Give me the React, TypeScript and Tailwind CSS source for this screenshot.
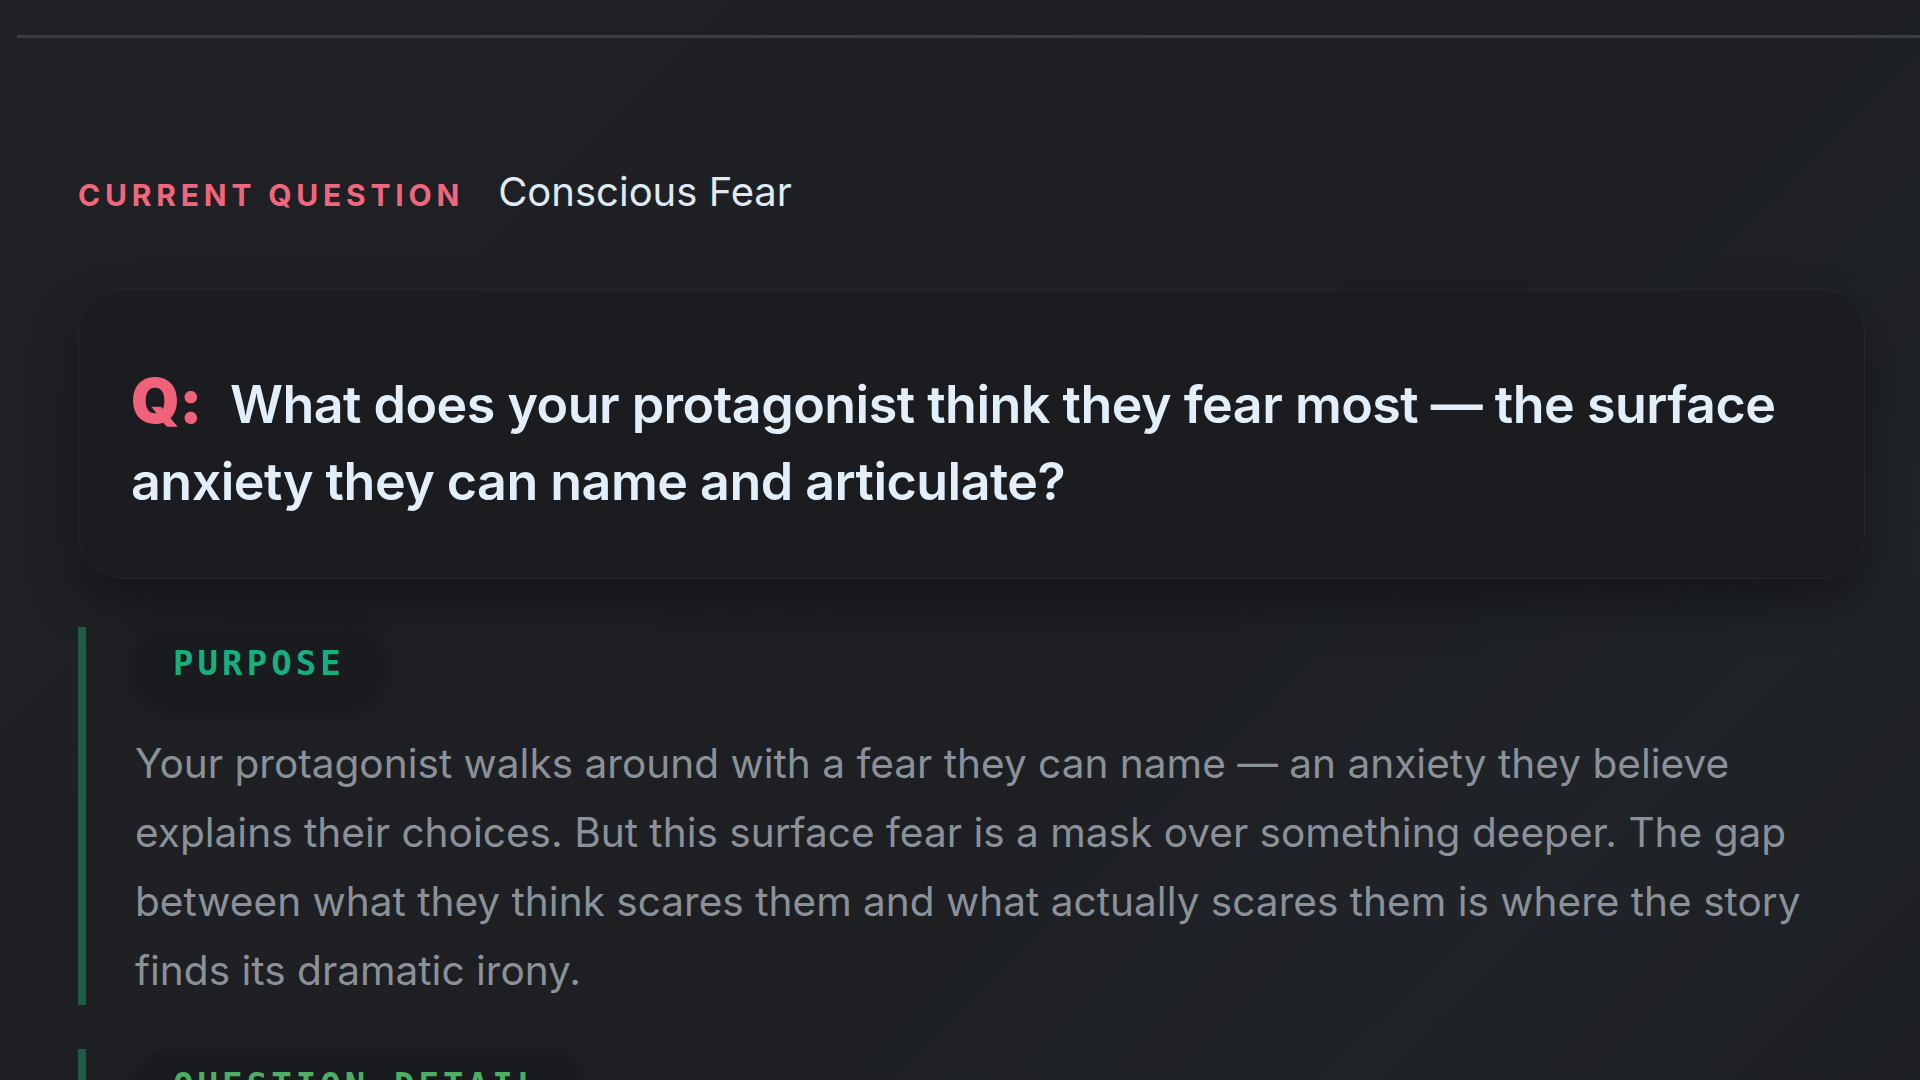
export default function App() {
  return (
    <div className="min-h-screen w-full overflow-hidden bg-[#1e2024] bg-[linear-gradient(135deg,#1f2125_0%,#1d1f23_55%,#202327_75%,#1c1e21_100%)] pt-[35px] font-['Inter',sans-serif]">
      {/* top rule */}
      <div className="ml-[17px] h-[3px] bg-[#383d42]" />

      <div className="pl-[78px] pr-[55px]">
        {/* header */}
        <div className="mt-[124px] flex items-baseline gap-[34px]">
          <span className="text-[30px] font-bold uppercase tracking-[0.16em] text-[#f0667c]">
            Current Question
          </span>
          <span className="text-[40px] font-normal text-[#dfeaf5]">Conscious Fear</span>
        </div>

        {/* question card */}
        <div className="mt-[67px] rounded-[44px] border border-[#24272b] bg-[#1a1c1f] px-[52px] pt-[72px] pb-[58px] shadow-[0_24px_48px_rgba(0,0,0,0.35)]">
          <p className="text-[52px] font-semibold leading-[77px] tracking-[-0.01em] text-[#e2eefa]">
            <span className="mr-[28px] text-[62px] font-black text-[#f0627a]">Q:</span>
            What does your protagonist think they fear most — the surface anxiety they can name and articulate?
          </p>
        </div>

        {/* purpose */}
        <section className="mt-[48px] border-l-[8px] border-[#1f5a46] pl-[49px]">
          <div className="inline-flex h-[72px] items-center rounded-full bg-[#191b1e] px-[38px] shadow-[0_10px_24px_rgba(0,0,0,0.3)]">
            <span className="font-['DejaVu_Sans_Mono',monospace] text-[34px] font-bold tracking-[0.12em] text-[#16b07e]">
              PURPOSE
            </span>
          </div>
          <p className="mt-[30px] -mb-[9px] text-[40.6px] leading-[69px] text-[#8a9199]">
            Your protagonist walks around with a fear they can name — an anxiety they believe explains their choices. But this surface fear is a mask over something deeper. The gap between what they think scares them and what actually scares them is where the story finds its dramatic irony.
          </p>
        </section>

        {/* question detail */}
        <section className="mt-[53px] border-l-[8px] border-[#1f5a46] pb-[200px] pl-[49px]">
          <div className="inline-flex h-[72px] items-center rounded-full bg-[#191b1e] px-[38px] shadow-[0_10px_24px_rgba(0,0,0,0.3)]">
            <span className="font-['DejaVu_Sans_Mono',monospace] text-[34px] font-bold tracking-[0.12em] text-[#4caf62]">
              QUESTION DETAIL
            </span>
          </div>
        </section>
      </div>
    </div>
  );
}
